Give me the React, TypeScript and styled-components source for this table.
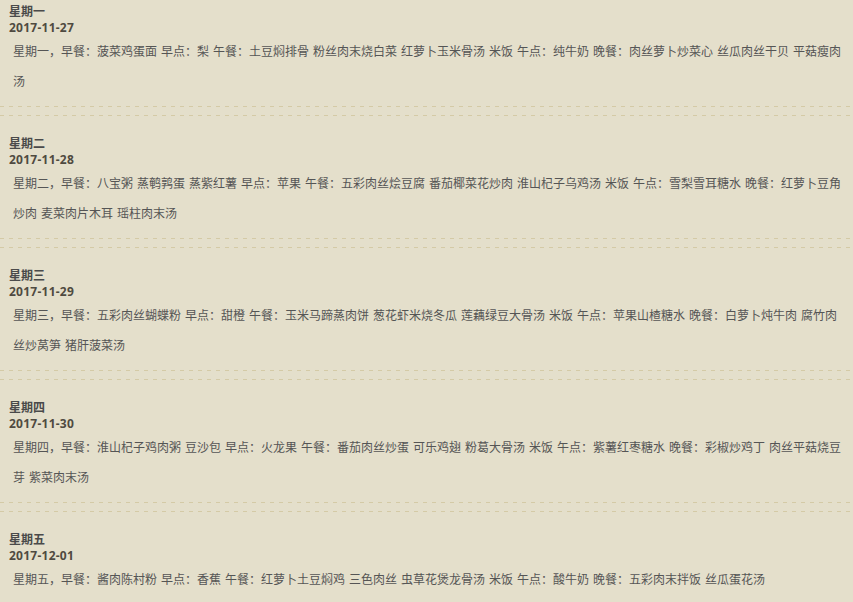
import React from "react";
import styled, { createGlobalStyle } from "styled-components";

const GlobalStyle = createGlobalStyle`
  html, body {
    margin: 0;
    padding: 0;
    background: #e4dfcb;
  }
  body {
    font-family: "Noto Sans CJK SC", "Noto Sans", sans-serif;
    font-size: 12px;
    color: #555;
    overflow: hidden;
  }
`;

type Day = { week: string; date: string; menu: string };

const days: Day[] = [
  {
    week: "星期一",
    date: "2017-11-27",
    menu:
      "星期一，早餐：菠菜鸡蛋面 早点：梨 午餐：土豆焖排骨 粉丝肉末烧白菜 红萝卜玉米骨汤 米饭 午点：纯牛奶 晚餐：肉丝萝卜炒菜心 丝瓜肉丝干贝 平菇瘦肉汤",
  },
  {
    week: "星期二",
    date: "2017-11-28",
    menu:
      "星期二，早餐：八宝粥 蒸鹌鹑蛋 蒸紫红薯 早点：苹果 午餐：五彩肉丝烩豆腐 番茄椰菜花炒肉 淮山杞子乌鸡汤 米饭 午点：雪梨雪耳糖水 晚餐：红萝卜豆角炒肉 麦菜肉片木耳 瑶柱肉末汤",
  },
  {
    week: "星期三",
    date: "2017-11-29",
    menu:
      "星期三，早餐：五彩肉丝蝴蝶粉 早点：甜橙 午餐：玉米马蹄蒸肉饼 葱花虾米烧冬瓜 莲藕绿豆大骨汤 米饭 午点：苹果山楂糖水 晚餐：白萝卜炖牛肉 腐竹肉丝炒莴笋 猪肝菠菜汤",
  },
  {
    week: "星期四",
    date: "2017-11-30",
    menu:
      "星期四，早餐：淮山杞子鸡肉粥 豆沙包 早点：火龙果 午餐：番茄肉丝炒蛋 可乐鸡翅 粉葛大骨汤 米饭 午点：紫薯红枣糖水 晚餐：彩椒炒鸡丁 肉丝平菇烧豆芽 紫菜肉末汤",
  },
  {
    week: "星期五",
    date: "2017-12-01",
    menu:
      "星期五，早餐：酱肉陈村粉 早点：香蕉 午餐：红萝卜土豆焖鸡 三色肉丝 虫草花煲龙骨汤 米饭 午点：酸牛奶 晚餐：五彩肉末拌饭 丝瓜蛋花汤",
  },
];

const List = styled.ul`
  list-style: none;
  margin: 0;
  padding: 0;
`;

const Item = styled.li`
  padding-top: 2px;
`;

const Week = styled.h4`
  margin: 0;
  padding-left: 9px;
  font-size: 12px;
  line-height: 17px;
  font-weight: bold;
  color: #4a4a4a;
`;

const DateLine = styled.div`
  padding-left: 9px;
  font-family: "Noto Sans", "Noto Sans CJK SC", sans-serif;
  font-size: 12px;
  line-height: 17px;
  font-weight: bold;
  letter-spacing: 0.25px;
  color: #4f4a40;
`;

const Menu = styled.p`
  margin: 0;
  padding: 0 8px 0 13px;
  font-size: 12px;
  line-height: 30px;
  word-spacing: 1.3px;
  color: #555;
`;

const Rule = styled.div<{ $gapAfter: number }>`
  height: 1px;
  margin-top: ${(p) => (p.$gapAfter === 8 ? 10 : 0)}px;
  margin-bottom: ${(p) => p.$gapAfter}px;
  background: repeating-linear-gradient(
    90deg,
    #d4caa6 0,
    #d4caa6 4px,
    transparent 4px,
    transparent 9px
  );
`;

export default function App() {
  return (
    <>
      <GlobalStyle />
      <List>
        {days.map((d) => (
          <Item key={d.date}>
            <Week>{d.week}</Week>
            <DateLine>{d.date}</DateLine>
            <Menu>{d.menu}</Menu>
            <Rule $gapAfter={8} />
            <Rule $gapAfter={16} />
          </Item>
        ))}
      </List>
    </>
  );
}
